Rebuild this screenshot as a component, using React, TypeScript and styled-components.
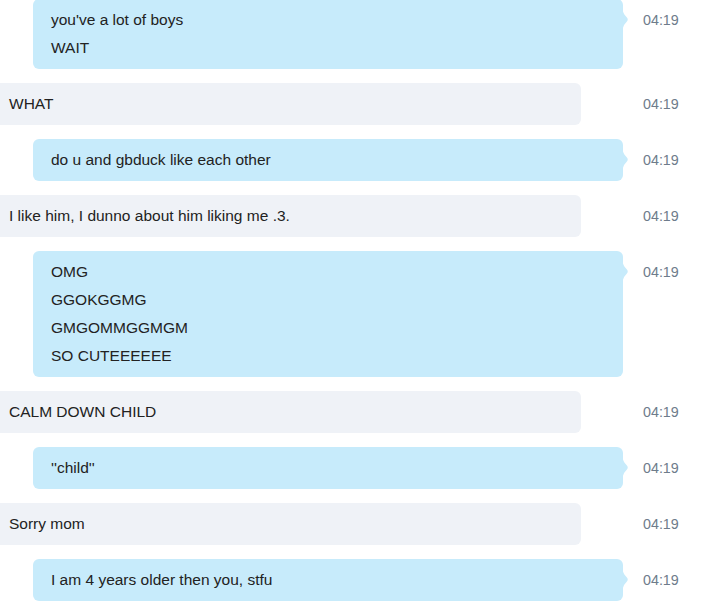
import React from "react";
import styled, { createGlobalStyle } from "styled-components";

const Global = createGlobalStyle`
  html, body { margin: 0; padding: 0; background: #ffffff; }
  body { font-family: "Liberation Sans", Arial, sans-serif; }
`;

const Feed = styled.div`
  display: flex;
  flex-direction: column;
  gap: 14px;
  margin-top: -1px;
  width: 714px;
`;

const Row = styled.div`
  display: flex;
  align-items: flex-start;
`;

const Lane = styled.div<{ $sent: boolean }>`
  width: 629px;
  display: flex;
  justify-content: ${(p) => (p.$sent ? "flex-end" : "flex-start")};
`;

const Bubble = styled.div<{ $sent: boolean }>`
  position: relative;
  box-sizing: border-box;
  width: ${(p) => (p.$sent ? "590px" : "581px")};
  margin-right: ${(p) => (p.$sent ? "6px" : "48px")};
  padding: 7px ${(p) => (p.$sent ? "18px" : "9px")};
  background: ${(p) => (p.$sent ? "#c7ebfb" : "#eff2f7")};
  border-radius: ${(p) => (p.$sent ? "6px" : "0 6px 6px 0")};
  color: #222222;
  font-size: 15.5px;
  line-height: 28px;
`;

const Line = styled.div`
  white-space: pre;
`;

const Tail = styled.svg`
  position: absolute;
  right: -6px;
  top: 6px;
  width: 7px;
  height: 29px;
`;

const Time = styled.div`
  padding-left: 14px;
  padding-top: 7px;
  font-size: 14.3px;
  line-height: 28px;
  color: #6e7c8b;
`;

type Msg = { sent: boolean; lines: string[] };

const messages: Msg[] = [
  { sent: true, lines: ["you've a lot of boys", "WAIT"] },
  { sent: false, lines: ["WHAT"] },
  { sent: true, lines: ["do u and gbduck like each other"] },
  { sent: false, lines: ["I like him, I dunno about him liking me .3."] },
  { sent: true, lines: ["OMG", "GGOKGGMG", "GMGOMMGGMGM", "SO CUTEEEEEE"] },
  { sent: false, lines: ["CALM DOWN CHILD"] },
  { sent: true, lines: ["''child''"] },
  { sent: false, lines: ["Sorry mom"] },
  { sent: true, lines: ["I am 4 years older then you, stfu"] },
];

export default function App() {
  return (
    <>
      <Global />
      <Feed>
        {messages.map((m, i) => (
          <Row key={i}>
            <Lane $sent={m.sent}>
              <Bubble $sent={m.sent}>
                {m.lines.map((l, j) => (
                  <Line key={j}>{l}</Line>
                ))}
                {m.sent && (
                  <Tail viewBox="0 0 7 29">
                    <path
                      d="M0 0 C0.5 6 1.5 9 4.5 12 Q7 14.5 4.5 17 C1.5 20 0.5 23 0 29 Z"
                      fill="#c7ebfb"
                    />
                  </Tail>
                )}
              </Bubble>
            </Lane>
            <Time>04:19</Time>
          </Row>
        ))}
      </Feed>
    </>
  );
}
